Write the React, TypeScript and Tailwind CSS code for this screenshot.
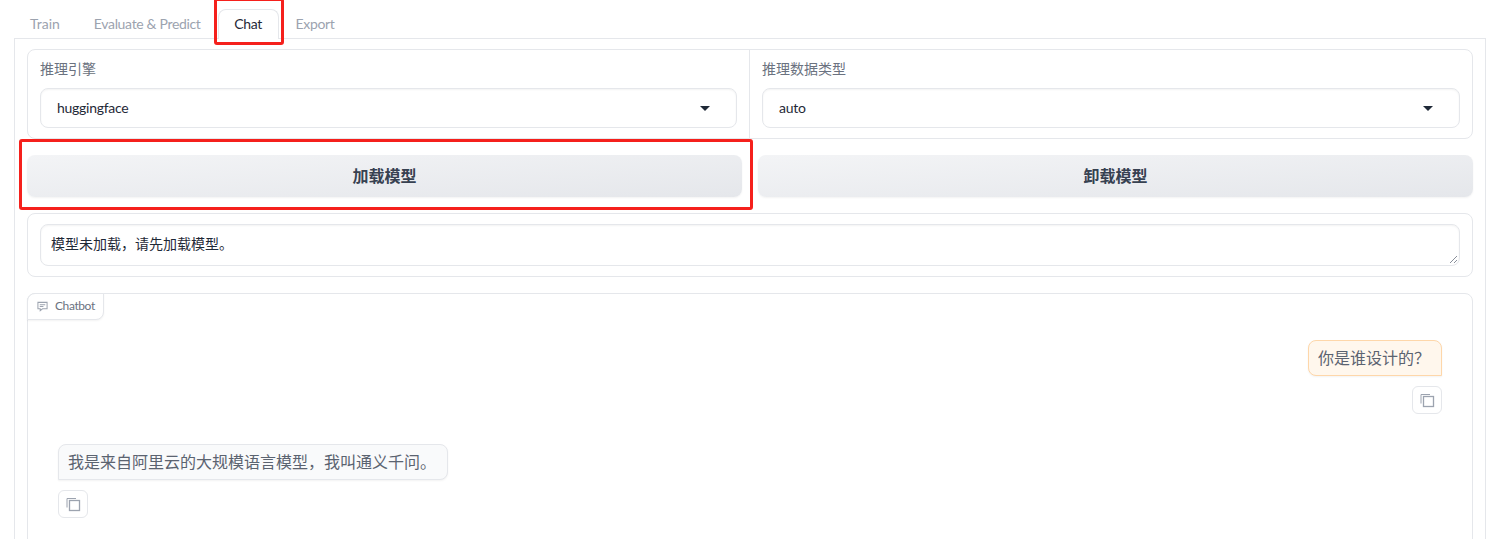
const FONT = 'font-["Lato","Noto_Sans_CJK_SC",sans-serif]'

function CopyIcon() {
  return (
    <svg width="15" height="15" viewBox="0 0 15 15" fill="none" className="text-[#9ca3af]">
      <path d="M1 10.5V1.5h9" stroke="currentColor" strokeWidth="1" />
      <rect x="3.5" y="3.5" width="10" height="10" stroke="currentColor" strokeWidth="1.3" />
    </svg>
  )
}

function CopyButton() {
  return (
    <button className="w-[30px] h-[28px] flex items-center justify-center rounded-md border border-[#e5e7eb] bg-white">
      <CopyIcon />
    </button>
  )
}

function Caret() {
  return (
    <svg width="10" height="5" viewBox="0 0 10 5" className="text-[#1f2937]">
      <path d="M0 0h10L5 5z" fill="currentColor" />
    </svg>
  )
}

function SelectField({ label, value, className }: { label: string; value: string; className: string }) {
  return (
    <div className={`${className} px-3 pt-[9px] pb-[10px]`}>
      <div className="text-[14px] leading-[20px] text-[#6b7280] mb-[9px]">{label}</div>
      <div className="h-[40px] flex items-center justify-between pl-4 pr-[26px] rounded-lg border border-[#e5e7eb] shadow-[inset_0_1px_2px_rgba(0,0,0,0.05)] text-[14px] tracking-[-0.27px] text-[#1f2937]">
        <span className="pb-[2px]">{value}</span>
        <Caret />
      </div>
    </div>
  )
}

export default function App() {
  return (
    <div className={`${FONT} relative h-[539px] w-[1507px] overflow-hidden bg-white`}>
      {/* Tabs */}
      <div className="h-[38px] pt-[9px] pl-[13px] flex text-[14px] tracking-[-0.33px] text-[#9ca3af]">
        <div className="px-[17px] leading-[30px] tracking-normal">Train</div>
        <div className="px-[17px] leading-[30px]">Evaluate &amp; Predict</div>
        <div className="relative z-10 h-[30px] w-[61px] text-center leading-[28px] text-[#1f2937] bg-white border border-b-0 border-[#e5e7eb] rounded-t-lg">Chat</div>
        <div className="px-[17px] leading-[30px]">Export</div>
      </div>

      <div className="ml-[14px] w-[1472px] h-[520px] border border-[#e5e7eb] px-3 pt-[10px] flex flex-col gap-4">
        {/* Engine / dtype */}
        <div className="flex h-[90px] shrink-0 rounded-lg border border-[#e5e7eb] divide-x divide-[#e5e7eb]">
          <SelectField className="w-[722px] shrink-0" label="推理引擎" value="huggingface" />
          <SelectField className="flex-1" label="推理数据类型" value="auto" />
        </div>

        {/* Load buttons */}
        <div className="flex gap-4 shrink-0">
          {['加载模型', '卸载模型'].map(t => (
            <button
              key={t}
              className="flex-1 h-[42px] rounded-lg bg-gradient-to-br from-[#f3f4f6] to-[#e5e7eb] shadow-[0_1px_2px_rgba(0,0,0,0.05)] text-[16px] font-semibold text-[#374151]"
            >
              {t}
            </button>
          ))}
        </div>

        {/* Info box */}
        <div className="shrink-0 h-[64px] rounded-lg border border-[#e5e7eb] px-3 pt-[10px]">
          <div className="relative h-[42px] rounded-lg border border-[#e5e7eb] shadow-[inset_0_1px_2px_rgba(0,0,0,0.05)] px-[10px] pb-[3px] flex items-center text-[14px] text-[#1f2937]">
            模型未加载，请先加载模型。
            <svg width="9" height="9" viewBox="0 0 9 9" className="absolute right-[1px] bottom-[1px] text-[#6b7280]">
              <path d="M1 8L8 1M5 8L8 5" stroke="currentColor" strokeWidth="0.8" />
            </svg>
          </div>
        </div>

        {/* Chatbot */}
        <div className="relative flex-1 rounded-lg border border-[#e5e7eb]">
          <div className="absolute left-[-1px] top-[-1px] h-[27px] w-[77px] flex items-center gap-[7px] pl-[9px] pb-[1px] rounded-tl-lg rounded-br-lg border border-[#e5e7eb] bg-white shadow-[0_1px_2px_rgba(0,0,0,0.05)] text-[12px] tracking-[-0.4px] text-[#6b7280]">
            <svg width="11" height="11" viewBox="0 0 12 12" fill="none" stroke="#9ca3af" strokeWidth="1.1">
              <path d="M1 1.5h10v7H6L3.5 10.5V8.5H1z" />
              <path d="M3 4h6M3 6h4" />
            </svg>
            Chatbot
          </div>

          <div className="flex flex-col items-end pt-[46px] pr-[30px]">
            <div className="h-[36px] pl-[9px] pr-[11px] flex items-center rounded-lg rounded-br-none border border-[#fed7aa] bg-[#fff7ed] text-[16px] text-[#5b6370] shadow-[0_1px_2px_rgba(0,0,0,0.05)]">
              你是谁设计的？
            </div>
            <div className="mt-[10px]"><CopyButton /></div>
          </div>

          <div className="flex flex-col items-start pl-[30px] mt-[30px]">
            <div className="h-[36px] pl-[9px] pr-[11px] flex items-center rounded-lg rounded-bl-none border border-[#e5e7eb] bg-[#f9fafb] text-[16px] text-[#5b6370] shadow-[0_1px_2px_rgba(0,0,0,0.05)]">
              我是来自阿里云的大规模语言模型，我叫通义千问。
            </div>
            <div className="mt-[10px]"><CopyButton /></div>
          </div>
        </div>
      </div>

      {/* Red annotations */}
      <div className="absolute left-[214px] top-[-2px] w-[70px] h-[47px] border-[3px] border-[#f5201c] rounded-[3px] pointer-events-none" />
      <div className="absolute left-[19px] top-[139px] w-[734px] h-[71px] border-[3px] border-[#f5201c] rounded-[3px] pointer-events-none" />
    </div>
  )
}
